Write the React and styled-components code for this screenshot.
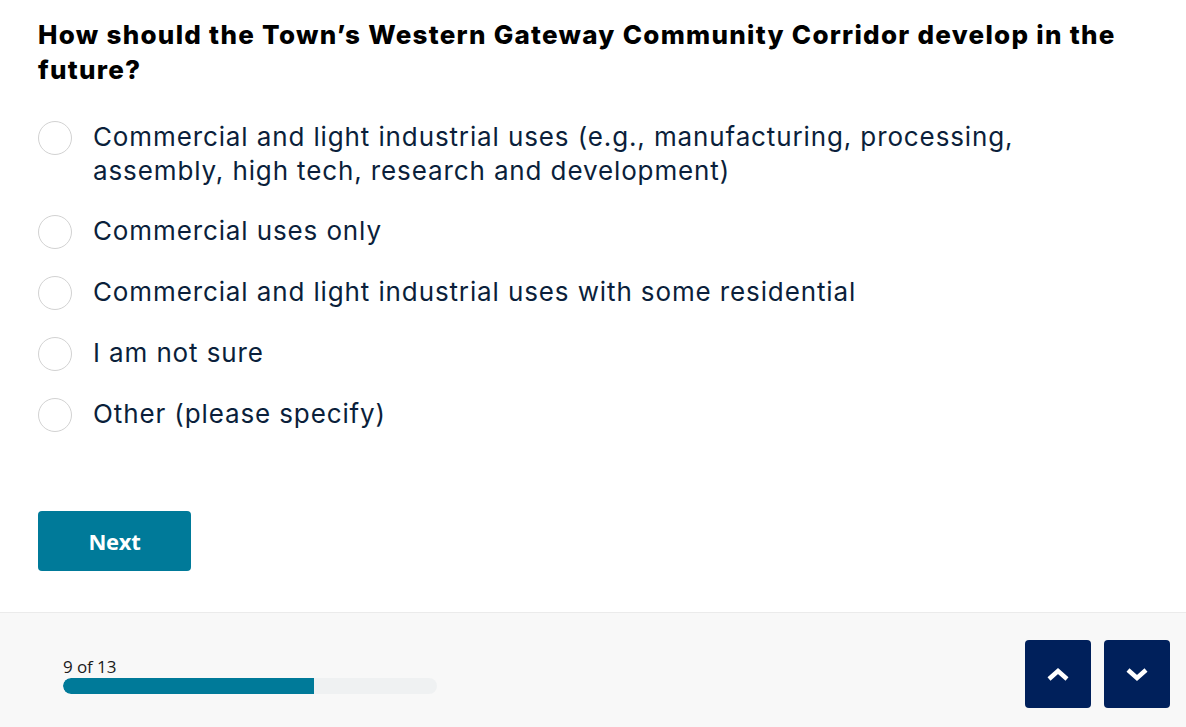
import styled, { createGlobalStyle } from 'styled-components'

const GlobalStyle = createGlobalStyle`
  html, body {
    margin: 0;
    padding: 0;
    background: #fff;
  }
  body {
    font-family: "Open Sans", "Noto Sans", sans-serif;
  }
`

const options = [
  'Commercial and light industrial uses (e.g., manufacturing, processing, assembly, high tech, research and development)',
  'Commercial uses only',
  'Commercial and light industrial uses with some residential',
  'I am not sure',
  'Other (please specify)',
]

const Page = styled.div`
  width: 1186px;
  height: 727px;
  display: flex;
  flex-direction: column;
  overflow: hidden;
`

const Survey = styled.main`
  padding: 17px 38px 0;
  display: flex;
  flex-direction: column;
  flex: 0 0 auto;
  height: 595px;
  box-sizing: border-box;
`

const Question = styled.h2`
  margin: 0;
  font-family: "Inter", sans-serif;
  font-weight: 800;
  font-size: 26px;
  line-height: 35px;
  letter-spacing: 1.28px;
  color: #000;
  max-width: 1100px;
`

const OptionList = styled.div`
  margin-top: 33px;
  display: flex;
  flex-direction: column;
  gap: 26px;
`

const Option = styled.label`
  display: flex;
  align-items: flex-start;
  gap: 21px;
  cursor: pointer;
`

const Radio = styled.span`
  flex: 0 0 auto;
  width: 32px;
  height: 32px;
  margin-top: 1px;
  border: 1px solid #d2d2d2;
  border-radius: 50%;
  background: #fff;
`

const OptionText = styled.span`
  font-family: "Inter", sans-serif;
  font-size: 26px;
  line-height: 34px;
  letter-spacing: 0.88px;
  color: #0b1f3b;
  max-width: 960px;
`

const NextButton = styled.button`
  margin-top: 79px;
  width: 153px;
  height: 60px;
  border: none;
  border-radius: 4px;
  background: #007a99;
  color: #fff;
  font-family: "Open Sans", sans-serif;
  font-weight: 700;
  font-size: 22px;
  letter-spacing: -0.3px;
  cursor: pointer;
`

const Footer = styled.footer`
  flex: 1;
  margin-top: 17px;
  border-top: 1px solid #ebebeb;
  background: #f8f8f8;
  display: flex;
  align-items: flex-start;
  justify-content: space-between;
  padding: 27px 16px 0 63px;
`

const Progress = styled.div`
  margin-top: 18px;
  display: flex;
  flex-direction: column;
`

const ProgressLabel = styled.span`
  font-size: 17px;
  line-height: 18px;
  color: #1b1b1b;
  letter-spacing: -0.1px;
`

const Track = styled.div`
  margin-top: 2px;
  width: 374px;
  height: 16px;
  border-radius: 8px;
  background: #eff1f2;
  overflow: hidden;
`

const Fill = styled.div`
  height: 100%;
  background: #007a99;
  border-radius: 8px 0 0 8px;
`

const NavGroup = styled.div`
  display: flex;
  gap: 13px;
`

const NavButton = styled.button`
  width: 66px;
  height: 68px;
  border: none;
  border-radius: 4px;
  background: #00205b;
  display: flex;
  align-items: center;
  justify-content: center;
  cursor: pointer;
  padding: 0;
`

const Chevron = ({ up }) => (
  <svg width="24" height="16" viewBox="0 0 24 16">
    <polyline
      points={up ? '3,13 12,5 21,13' : '3,4 12,12 21,4'}
      fill="none"
      stroke="#fff"
      strokeWidth="4.5"
      strokeLinecap="butt"
      strokeLinejoin="miter"
    />
  </svg>
)

export default function App() {
  const current = 9
  const total = 13

  return (
    <Page>
      <GlobalStyle />
      <Survey>
        <Question>
          How should the Town’s Western Gateway Community Corridor develop in the future?
        </Question>
        <OptionList>
          {options.map((text) => (
            <Option key={text}>
              <Radio />
              <OptionText>{text}</OptionText>
            </Option>
          ))}
        </OptionList>
        <NextButton>Next</NextButton>
      </Survey>
      <Footer>
        <Progress>
          <ProgressLabel>
            {current} of {total}
          </ProgressLabel>
          <Track>
            <Fill style={{ width: '67%' }} />
          </Track>
        </Progress>
        <NavGroup>
          <NavButton aria-label="Previous">
            <Chevron up />
          </NavButton>
          <NavButton aria-label="Next">
            <Chevron />
          </NavButton>
        </NavGroup>
      </Footer>
    </Page>
  )
}
